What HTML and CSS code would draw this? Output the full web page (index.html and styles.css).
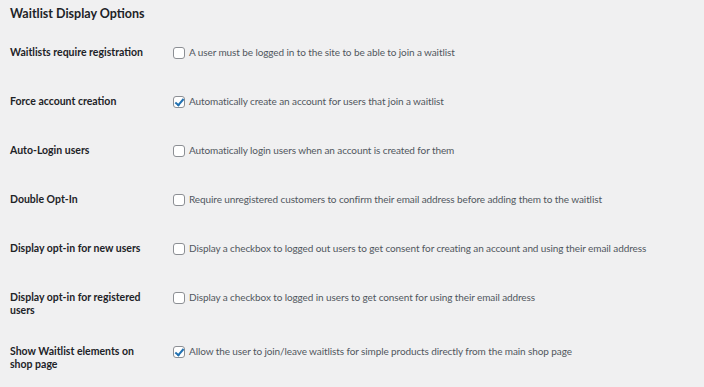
FILE: index.html
```html
<!DOCTYPE html>
<html lang="en">
<head>
    <meta charset="UTF-8">
    <title>Waitlist Display Options</title>
    <link rel="stylesheet" href="styles.css">
</head>
<body>
    <div class="wrap">
        <h2 class="section-title">Waitlist Display Options</h2>

        <div class="form-table">
            <div class="form-row">
                <div class="form-label">Waitlists require registration</div>
                <label class="form-field"><input type="checkbox"> A user must be logged in to the site to be able to join a waitlist</label>
            </div>
            <div class="form-row">
                <div class="form-label">Force account creation</div>
                <label class="form-field"><input type="checkbox" checked> Automatically create an account for users that join a waitlist</label>
            </div>
            <div class="form-row">
                <div class="form-label">Auto-Login users</div>
                <label class="form-field"><input type="checkbox"> Automatically login users when an account is created for them</label>
            </div>
            <div class="form-row">
                <div class="form-label">Double Opt-In</div>
                <label class="form-field"><input type="checkbox"> Require unregistered customers to confirm their email address before adding them to the waitlist</label>
            </div>
            <div class="form-row">
                <div class="form-label">Display opt-in for new users</div>
                <label class="form-field"><input type="checkbox"> Display a checkbox to logged out users to get consent for creating an account and using their email address</label>
            </div>
            <div class="form-row">
                <div class="form-label">Display opt-in for registered users</div>
                <label class="form-field"><input type="checkbox"> Display a checkbox to logged in users to get consent for using their email address</label>
            </div>
            <div class="form-row">
                <div class="form-label">Show Waitlist elements on shop page</div>
                <label class="form-field"><input type="checkbox" checked> Allow the user to join/leave waitlists for simple products directly from the main shop page</label>
            </div>
        </div>
    </div>
</body>
</html>
```

FILE: styles.css
```css
* {
    margin: 0;
    padding: 0;
    box-sizing: border-box;
}

body {
    background-color: #f0f0f1;
    color: #1d2327;
    font-family: Lato, sans-serif;
    font-size: 10.5px;
    line-height: 13px;
}

.wrap {
    padding: 0 10px;
}

.section-title {
    font-size: 12.5px;
    font-weight: 700;
    line-height: 18px;
    padding-top: 5px;
    margin-bottom: 9px;
}

.form-row {
    display: grid;
    grid-template-columns: 163px 1fr;
    min-height: 49px;
    padding: 14px 0;
}

.form-label {
    font-weight: 700;
    padding-right: 23px;
}

.form-field {
    display: flex;
    align-items: center;
    gap: 4px;
    height: 13px;
    color: #50575e;
    font-size: 10px;
    letter-spacing: -0.1px;
    white-space: nowrap;
}

.form-field input {
    appearance: none;
    width: 12px;
    height: 12px;
    border: 1px solid #8c8f94;
    border-radius: 3px;
    background: #fff;
    position: relative;
    flex-shrink: 0;
}

.form-field input:checked::before {
    content: "";
    position: absolute;
    left: 3px;
    top: 0px;
    width: 3px;
    height: 7px;
    border: solid #2271b1;
    border-width: 0 2px 2px 0;
    transform: rotate(40deg);
}
```
